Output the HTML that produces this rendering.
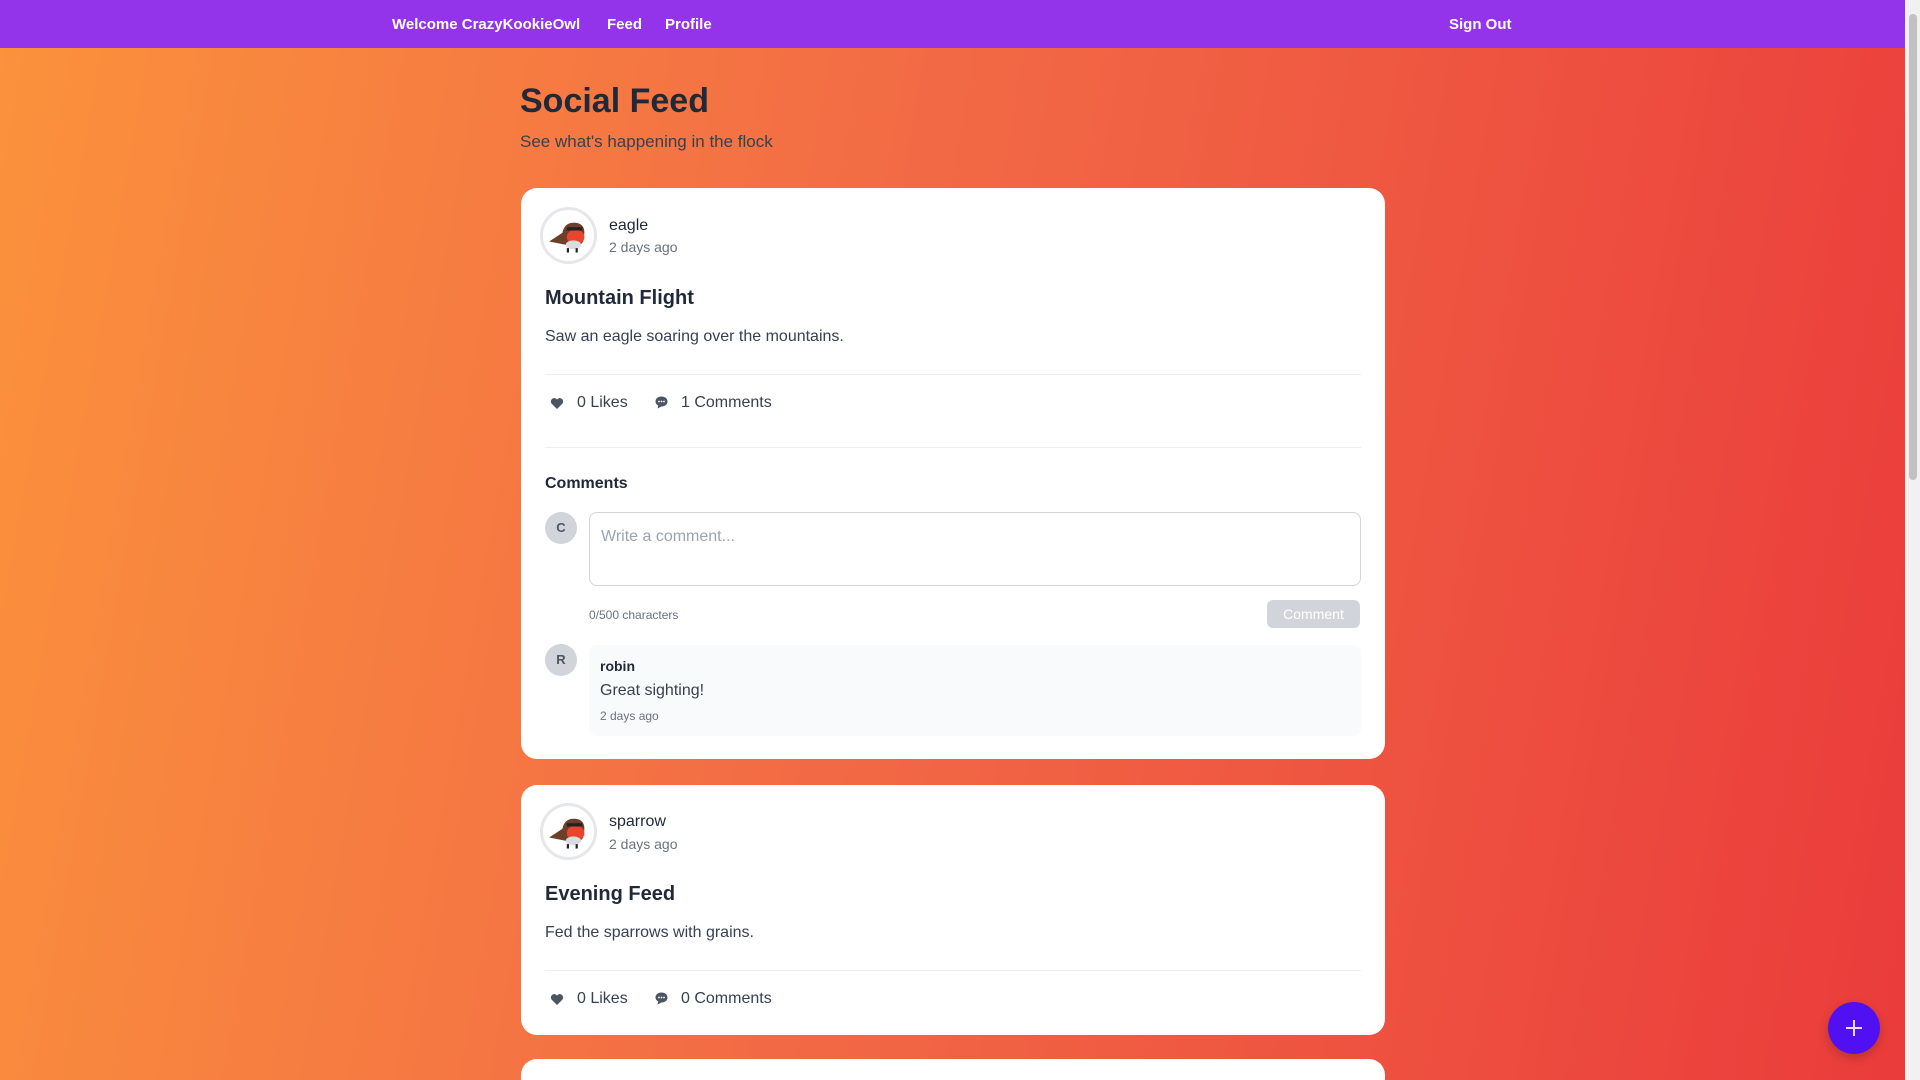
<!DOCTYPE html>
<html style="overflow:hidden;height:1080px"><head><meta charset="utf-8"><style>
*{box-sizing:border-box;margin:0;padding:0}
html,body{width:1920px;height:1080px;overflow:hidden}
body{font-family:"Liberation Sans",sans-serif;background:linear-gradient(100deg,#fb923c 0%,#f26a45 45%,#ea3b3b 100%);position:relative;color:#1f2937}
nav{position:absolute;left:0;top:0;width:1905px;height:48px;background:#9333ea;color:#fff;font-weight:bold;font-size:15px}
nav span{position:absolute;top:16px}
.sb{position:absolute;right:0;top:0;width:15px;height:1080px;background:#f1f1f1}
.sb div{position:absolute;left:4px;top:14px;width:8px;height:466px;background:#c1c1c1;border-radius:4px}
h1{position:absolute;left:520px;top:82px;font-size:34px;font-weight:bold;color:#1f2937}
.sub{position:absolute;left:520px;top:132px;font-size:17px;color:#374151}
.card{position:absolute;left:521px;width:864px;background:#fff;border-radius:16px}
.av{position:absolute;left:540px;width:57px;height:57px;border-radius:50%;border:3px solid #e5e7eb;background:#fff;overflow:hidden}
.av svg{position:absolute;left:4px;top:6px}
.t{position:absolute;white-space:nowrap}
.hr{position:absolute;left:545px;width:816px;height:1px;background:#eceef1}
.sm{width:32px;height:32px;border-radius:50%;background:#d1d5db;color:#4b5563;font-size:13px;font-weight:bold;text-align:center;line-height:32px;position:absolute;left:545px}
</style></head><body>
<nav><span style="left:392px">Welcome CrazyKookieOwl</span><span style="left:607px">Feed</span><span style="left:665px">Profile</span><span style="left:1449px">Sign Out</span></nav>
<h1>Social Feed</h1>
<div class="sub">See what's happening in the flock</div>

<div class="card" style="top:188px;height:571px"></div>
<div class="av" style="top:207px"><svg width="44" height="40" viewBox="0 0 40 34"><path d="M2 22 L14 14 Q16 4 26 5 Q34 6 34 14 L33 22 Q30 27 22 26 Z" fill="#6b3f2a"/><ellipse cx="26" cy="18" rx="8" ry="7" fill="#e8452c"/><ellipse cx="24" cy="25" rx="7" ry="4" fill="#d9dde0"/><rect x="18" y="9" width="14" height="3" fill="#222"/><path d="M19 28v4M27 28v4" stroke="#222" stroke-width="2"/></svg></div>
<div class="t" style="left:609px;top:217px;font-size:16px">eagle</div>
<div class="t" style="left:609px;top:239px;font-size:14px;color:#6b7280">2 days ago</div>
<div class="t" style="left:545px;top:287px;font-size:20px;font-weight:bold">Mountain Flight</div>
<div class="t" style="left:545px;top:328px;font-size:16px;color:#374151">Saw an eagle soaring over the mountains.</div>
<div class="hr" style="top:374px"></div>
<svg class="t" style="left:550px;top:397px" width="14" height="13" viewBox="0 0 14 13"><path d="M7 12 L1.5 6.5 A3.2 3.2 0 0 1 7 2.5 A3.2 3.2 0 0 1 12.5 6.5 Z" fill="#4b5563"/></svg>
<div class="t" style="left:577px;top:394px;font-size:16px;color:#374151">0 Likes</div>
<svg class="t" style="left:654px;top:395px" width="15" height="15" viewBox="0 0 15 15"><path d="M7.5 1.5C11 1.5 13.5 3.6 13.5 6.5S11 11.5 7.5 11.5L3.5 13.5 4.2 10.5C2.3 9.5 1.5 8 1.5 6.5 1.5 3.6 4 1.5 7.5 1.5Z" fill="#4b5563"/><circle cx="5" cy="6.5" r=".9" fill="#fff"/><circle cx="7.5" cy="6.5" r=".9" fill="#fff"/><circle cx="10" cy="6.5" r=".9" fill="#fff"/></svg>
<div class="t" style="left:681px;top:394px;font-size:16px;color:#374151">1 Comments</div>
<div class="hr" style="top:447px"></div>
<div class="t" style="left:545px;top:475px;font-size:16px;font-weight:bold;color:#1f2937">Comments</div>
<div class="sm" style="top:512px">C</div>
<div class="t" style="left:589px;top:512px;width:772px;height:74px;border:1px solid #d1d5db;border-radius:8px"></div>
<div class="t" style="left:601px;top:528px;font-size:16px;color:#9ca3af">Write a comment...</div>
<div class="t" style="left:589px;top:608px;font-size:12px;color:#6b7280">0/500 characters</div>
<div class="t" style="left:1267px;top:600px;width:93px;height:28px;background:#d1d5db;border-radius:6px;color:#fff;font-size:14px;text-align:center;line-height:28px">Comment</div>
<div class="sm" style="top:644px">R</div>
<div class="t" style="left:589px;top:645px;width:772px;height:91px;background:#f9fafb;border-radius:8px"></div>
<div class="t" style="left:600px;top:658px;font-size:14px;font-weight:bold;color:#1f2937">robin</div>
<div class="t" style="left:600px;top:682px;font-size:16px;color:#374151">Great sighting!</div>
<div class="t" style="left:600px;top:709px;font-size:12px;color:#6b7280">2 days ago</div>

<div class="card" style="top:785px;height:250px"></div>
<div class="av" style="top:803px"><svg width="44" height="40" viewBox="0 0 40 34"><path d="M2 22 L14 14 Q16 4 26 5 Q34 6 34 14 L33 22 Q30 27 22 26 Z" fill="#6b3f2a"/><ellipse cx="26" cy="18" rx="8" ry="7" fill="#e8452c"/><ellipse cx="24" cy="25" rx="7" ry="4" fill="#d9dde0"/><rect x="18" y="9" width="14" height="3" fill="#222"/><path d="M19 28v4M27 28v4" stroke="#222" stroke-width="2"/></svg></div>
<div class="t" style="left:609px;top:813px;font-size:16px">sparrow</div>
<div class="t" style="left:609px;top:836px;font-size:14px;color:#6b7280">2 days ago</div>
<div class="t" style="left:545px;top:883px;font-size:20px;font-weight:bold">Evening Feed</div>
<div class="t" style="left:545px;top:924px;font-size:16px;color:#374151">Fed the sparrows with grains.</div>
<div class="hr" style="top:970px"></div>
<svg class="t" style="left:550px;top:993px" width="14" height="13" viewBox="0 0 14 13"><path d="M7 12 L1.5 6.5 A3.2 3.2 0 0 1 7 2.5 A3.2 3.2 0 0 1 12.5 6.5 Z" fill="#4b5563"/></svg>
<div class="t" style="left:577px;top:990px;font-size:16px;color:#374151">0 Likes</div>
<svg class="t" style="left:654px;top:991px" width="15" height="15" viewBox="0 0 15 15"><path d="M7.5 1.5C11 1.5 13.5 3.6 13.5 6.5S11 11.5 7.5 11.5L3.5 13.5 4.2 10.5C2.3 9.5 1.5 8 1.5 6.5 1.5 3.6 4 1.5 7.5 1.5Z" fill="#4b5563"/><circle cx="5" cy="6.5" r=".9" fill="#fff"/><circle cx="7.5" cy="6.5" r=".9" fill="#fff"/><circle cx="10" cy="6.5" r=".9" fill="#fff"/></svg>
<div class="t" style="left:681px;top:990px;font-size:16px;color:#374151">0 Comments</div>

<div class="card" style="top:1059px;height:21px;border-radius:16px 16px 0 0"></div>

<div class="t" style="left:1828px;top:1002px;width:52px;height:52px;border-radius:50%;background:#5010f2;box-shadow:0 4px 10px rgba(0,0,0,.2)"><svg width="52" height="52"><path d="M26 18v16M18 26h16" stroke="#e9ddff" stroke-width="2"/></svg></div>
<div class="sb"><div></div></div>
</body></html>
